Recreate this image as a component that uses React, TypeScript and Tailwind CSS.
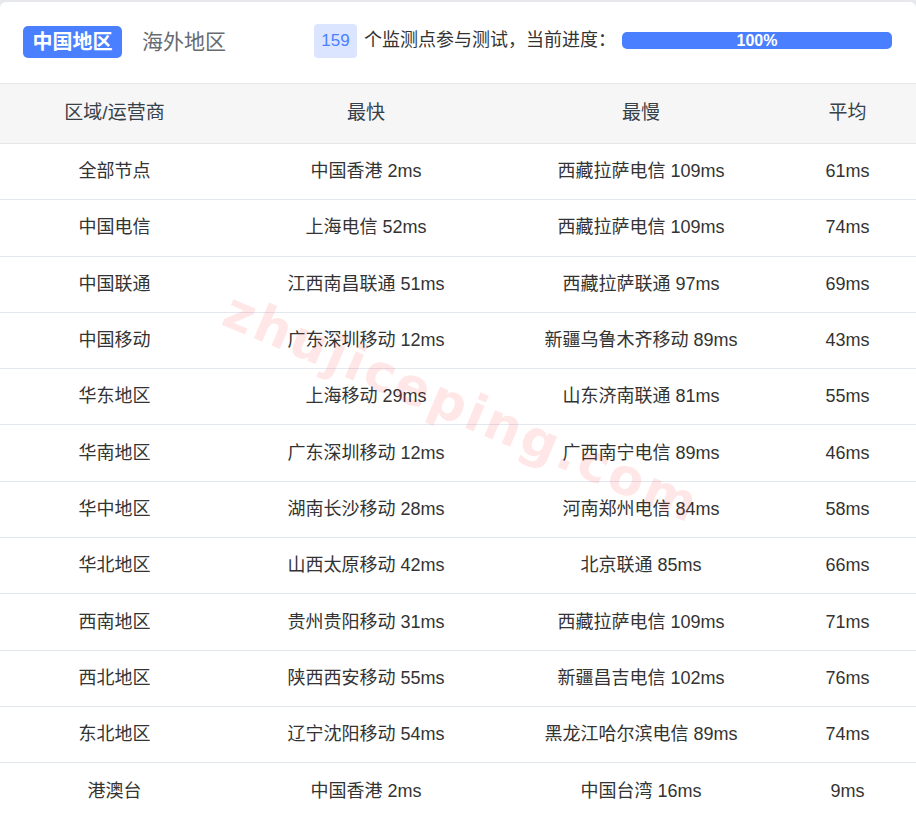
import React from 'react';

const rows = [
  ['全部节点', '中国香港 2ms', '西藏拉萨电信 109ms', '61ms'],
  ['中国电信', '上海电信 52ms', '西藏拉萨电信 109ms', '74ms'],
  ['中国联通', '江西南昌联通 51ms', '西藏拉萨联通 97ms', '69ms'],
  ['中国移动', '广东深圳移动 12ms', '新疆乌鲁木齐移动 89ms', '43ms'],
  ['华东地区', '上海移动 29ms', '山东济南联通 81ms', '55ms'],
  ['华南地区', '广东深圳移动 12ms', '广西南宁电信 89ms', '46ms'],
  ['华中地区', '湖南长沙移动 28ms', '河南郑州电信 84ms', '58ms'],
  ['华北地区', '山西太原移动 42ms', '北京联通 85ms', '66ms'],
  ['西南地区', '贵州贵阳移动 31ms', '西藏拉萨电信 109ms', '71ms'],
  ['西北地区', '陕西西安移动 55ms', '新疆昌吉电信 102ms', '76ms'],
  ['东北地区', '辽宁沈阳移动 54ms', '黑龙江哈尔滨电信 89ms', '74ms'],
  ['港澳台', '中国香港 2ms', '中国台湾 16ms', '9ms'],
];

const cols = 'grid grid-cols-[229px_274px_276px_1fr]';

const App = () => {
  return (
    <div className="relative min-h-[819px] bg-[#e6e8eb] pt-[2px] font-['Liberation_Sans','Noto_Sans_CJK_SC',sans-serif] overflow-hidden">
      <div className="bg-white rounded-t-[6px] min-h-[817px]">
        {/* top bar */}
        <div className="h-[82px] flex items-center border-b border-[#e5e7eb] px-[23px]">
          <div className="flex items-center gap-[20px] -mt-[2px]">
            <span className="bg-[#4a80ff] text-white text-[20px] font-bold rounded-[5px] h-[32px] w-[99px] flex items-center justify-center">
              中国地区
            </span>
            <span className="text-[#666b70] text-[21px]">海外地区</span>
          </div>
          <div className="ml-[88px] flex items-center -mt-[4px]">
            <span className="bg-[#dbe5ff] text-[#4a80ff] text-[17px] rounded-[4px] h-[34px] w-[43px] flex items-center justify-center">
              159
            </span>
            <span className="ml-[7px] text-[#333] text-[18px]">个监测点参与测试，当前进度：</span>
          </div>
          <div className="ml-auto mr-[1px] -mt-[4px] w-[270px] h-[17px] rounded-[5px] bg-[#4a80ff] flex items-center justify-center text-white text-[16px] font-bold leading-none">
            100%
          </div>
        </div>

        {/* table header */}
        <div className={`${cols} h-[60px] bg-[#f6f6f6] border-b border-[#e5e7eb] text-[19px] text-[#36414a] items-center text-center`}>
          <div>区域/运营商</div>
          <div>最快</div>
          <div>最慢</div>
          <div>平均</div>
        </div>

        {rows.map((r, i) => (
          <div
            key={i}
            className={`${cols} h-[56.3px] items-center text-center text-[18px] text-[#333] ${i < rows.length - 1 ? 'border-b border-[#e3e8ef]' : ''}`}
          >
            {r.map((c, j) => (
              <div key={j}>{c}</div>
            ))}
          </div>
        ))}
      </div>

      {/* watermark */}
      <div className="pointer-events-none absolute left-[206px] top-[370px] rotate-[23deg] origin-center text-[51px] font-bold font-['DejaVu_Sans',sans-serif] text-[rgba(255,40,40,0.11)] tracking-[3px] whitespace-nowrap">
        zhujiceping.com
      </div>
    </div>
  );
};

export default App;
